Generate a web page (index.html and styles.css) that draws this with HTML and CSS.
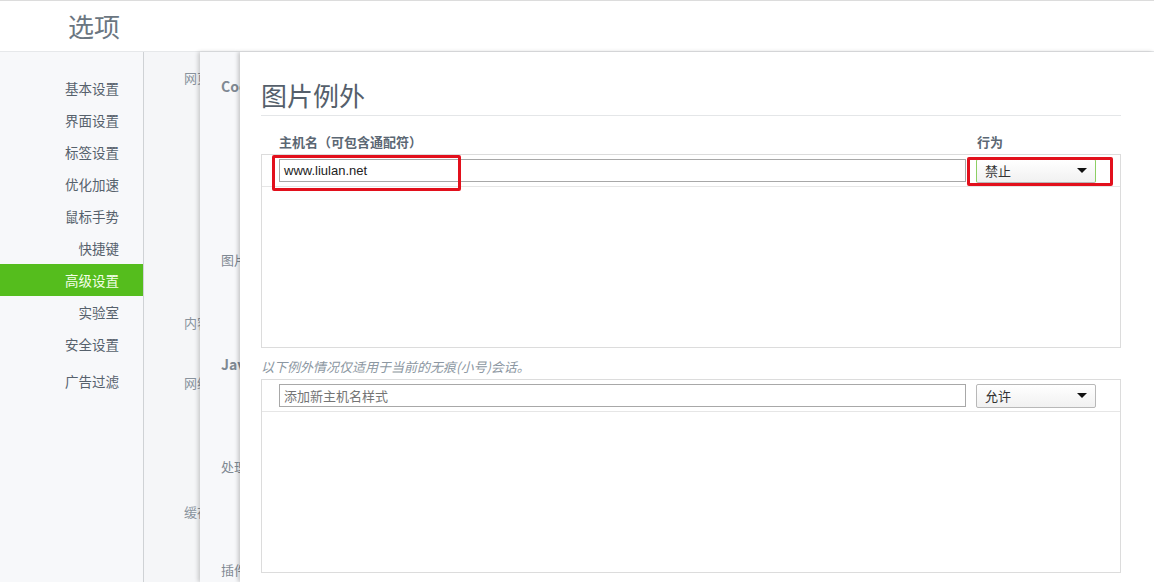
FILE: index.html
```html
<!DOCTYPE html>
<html lang="zh">
<head>
<meta charset="utf-8">
<title>选项</title>
<link rel="stylesheet" href="styles.css">
</head>
<body>
<header class="top"><h1 class="top-title">选项</h1></header>
<div class="body">
  <nav class="side">
    <div class="side-item">基本设置</div>
    <div class="side-item">界面设置</div>
    <div class="side-item">标签设置</div>
    <div class="side-item">优化加速</div>
    <div class="side-item">鼠标手势</div>
    <div class="side-item">快捷键</div>
    <div class="side-item active">高级设置</div>
    <div class="side-item">实验室</div>
    <div class="side-item">安全设置</div>
    <div class="side-item last">广告过滤</div>
  </nav>
  <div class="layer1">
    <div class="l1 l1a">网页</div>
    <div class="l1 l1b">内容</div>
    <div class="l1 l1c">网络</div>
    <div class="l1 l1d">缓存</div>
  </div>
  <div class="layer2">
    <div class="l2 l2a">Cookie</div>
    <div class="l2 l2b">图片</div>
    <div class="l2 l2c">Java</div>
    <div class="l2 l2d">处理</div>
    <div class="l2 l2e">插件</div>
  </div>
  <main class="main">
    <h2 class="title">图片例外</h2>
    <div class="cols">
      <span class="col-host">主机名（可包含通配符）</span>
      <span class="col-act">行为</span>
    </div>
    <div class="table">
      <div class="row">
        <div class="input filled">www.liulan.net</div>
        <div class="select focus"><span>禁止</span><span class="caret"></span></div>
      </div>
      <div class="mark mark1"></div>
      <div class="mark mark2"></div>
    </div>
    <p class="note">以下例外情况仅适用于当前的无痕(小号)会话。</p>
    <div class="table table2">
      <div class="row">
        <div class="input placeholder">添加新主机名样式</div>
        <div class="select"><span>允许</span><span class="caret"></span></div>
      </div>
    </div>
  </main>
</div>
</body>
</html>
```

FILE: styles.css
```css
* { box-sizing: border-box; }
html, body { margin: 0; padding: 0; }
body {
  width: 1154px;
  height: 582px;
  overflow: hidden;
  background: #fff;
  font-family: "Noto Sans CJK SC", "Liberation Sans", sans-serif;
}
.top {
  height: 52px;
  border-top: 1px solid #dcdcdc;
  border-bottom: 1px solid #e6e8ea;
  display: flex;
  align-items: center;
  padding-left: 68px;
}
.top-title {
  margin: 0;
  font-size: 26px;
  font-weight: normal;
  color: #6b7681;
  line-height: 1;
}
.body {
  display: flex;
  height: 530px;
}
.side {
  width: 144px;
  flex: none;
  background: #f7f8fa;
  border-right: 1px solid #cfd2d5;
  padding-top: 20px;
}
.side-item {
  height: 32px;
  line-height: 32px;
  text-align: right;
  padding-right: 24px;
  font-size: 13.5px;
  color: #56616c;
}
.side-item.active {
  background: #55bd1d;
  color: #f4ffe8;
}
.side-item.last { margin-top: 5px; }
.layer1 {
  width: 56px;
  flex: none;
  background: #f5f6f8;
  overflow: hidden;
  white-space: nowrap;
  padding-left: 40px;
  font-size: 13px;
  color: #89939d;
}
.l1 { height: 18px; line-height: 18px; }
.l1a { margin-top: 17px; }
.l1b { margin-top: 227px; }
.l1c { margin-top: 42px; }
.l1d { margin-top: 111px; }
.layer2 {
  width: 40px;
  flex: none;
  background: #f7f8fa;
  overflow: hidden;
  white-space: nowrap;
  padding-left: 21px;
  font-size: 14px;
  font-weight: bold;
  color: #7f8993;
  box-shadow: -2px 0 4px rgba(0,0,0,0.18);
  position: relative;
  z-index: 1;
}
.l2 { height: 20px; line-height: 20px; }
.l2a { margin-top: 24px; }
.l2b { margin-top: 154px; font-weight: normal; font-size: 13px; }
.l2c { margin-top: 84px; }
.l2d { margin-top: 83px; font-weight: normal; font-size: 13px; }
.l2e { margin-top: 83px; font-weight: normal; font-size: 13px; }
.main {
  flex: 1;
  background: #fff;
  padding: 27px 33px 0 21px;
  box-shadow: -2px 0 4px rgba(0,0,0,0.2);
  position: relative;
  z-index: 2;
}
.title {
  margin: 0;
  font-size: 26px;
  font-weight: normal;
  line-height: 32px;
  color: #555f6b;
  padding-bottom: 4px;
  border-bottom: 1px solid #e4e6e8;
}
.cols {
  display: flex;
  margin-top: 16px;
  height: 22px;
  font-size: 13px;
  font-weight: bold;
  color: #5b6773;
  line-height: 20px;
}
.col-host { padding-left: 18px; width: 716px; }
.table {
  position: relative;
  height: 194px;
  border: 1px solid #dcdcdc;
}
.row {
  display: flex;
  align-items: center;
  gap: 10px;
  height: 32px;
  padding-left: 17px;
  border-bottom: 1px solid #e6e6e6;
}
.input {
  width: 687px;
  height: 23px;
  border: 1px solid #a8a8a8;
  font-size: 13px;
  line-height: 21px;
  padding-left: 4px;
}
.input.filled {
  font-family: "Liberation Sans", Arial, sans-serif;
  color: #222;
}
.input.placeholder { color: #757575; }
.select {
  width: 120px;
  height: 24px;
  border: 1px solid #b8b8b8;
  border-radius: 2px;
  background: linear-gradient(#fff, #f1f1f1);
  font-size: 13px;
  color: #333;
  display: flex;
  align-items: center;
  justify-content: space-between;
  padding: 0 8px;
}
.select.focus {
  border-left-color: #8ccf63;
  border-right-color: #8ccf63;
  border-top-color: #f3d7b4;
}
.caret {
  width: 0;
  height: 0;
  border-left: 5px solid transparent;
  border-right: 5px solid transparent;
  border-top: 5px solid #111;
}
.mark {
  position: absolute;
  border: 3px solid #e2101c;
  border-radius: 2px;
}
.mark1 { left: 10px; top: 0; width: 189px; height: 36px; }
.mark2 { left: 705px; top: 2px; width: 146px; height: 29px; }
.note {
  margin: 10px 0 0 0;
  height: 21px;
  font-size: 13px;
  line-height: 17px;
  font-style: italic;
  color: #8c97a2;
}
```
